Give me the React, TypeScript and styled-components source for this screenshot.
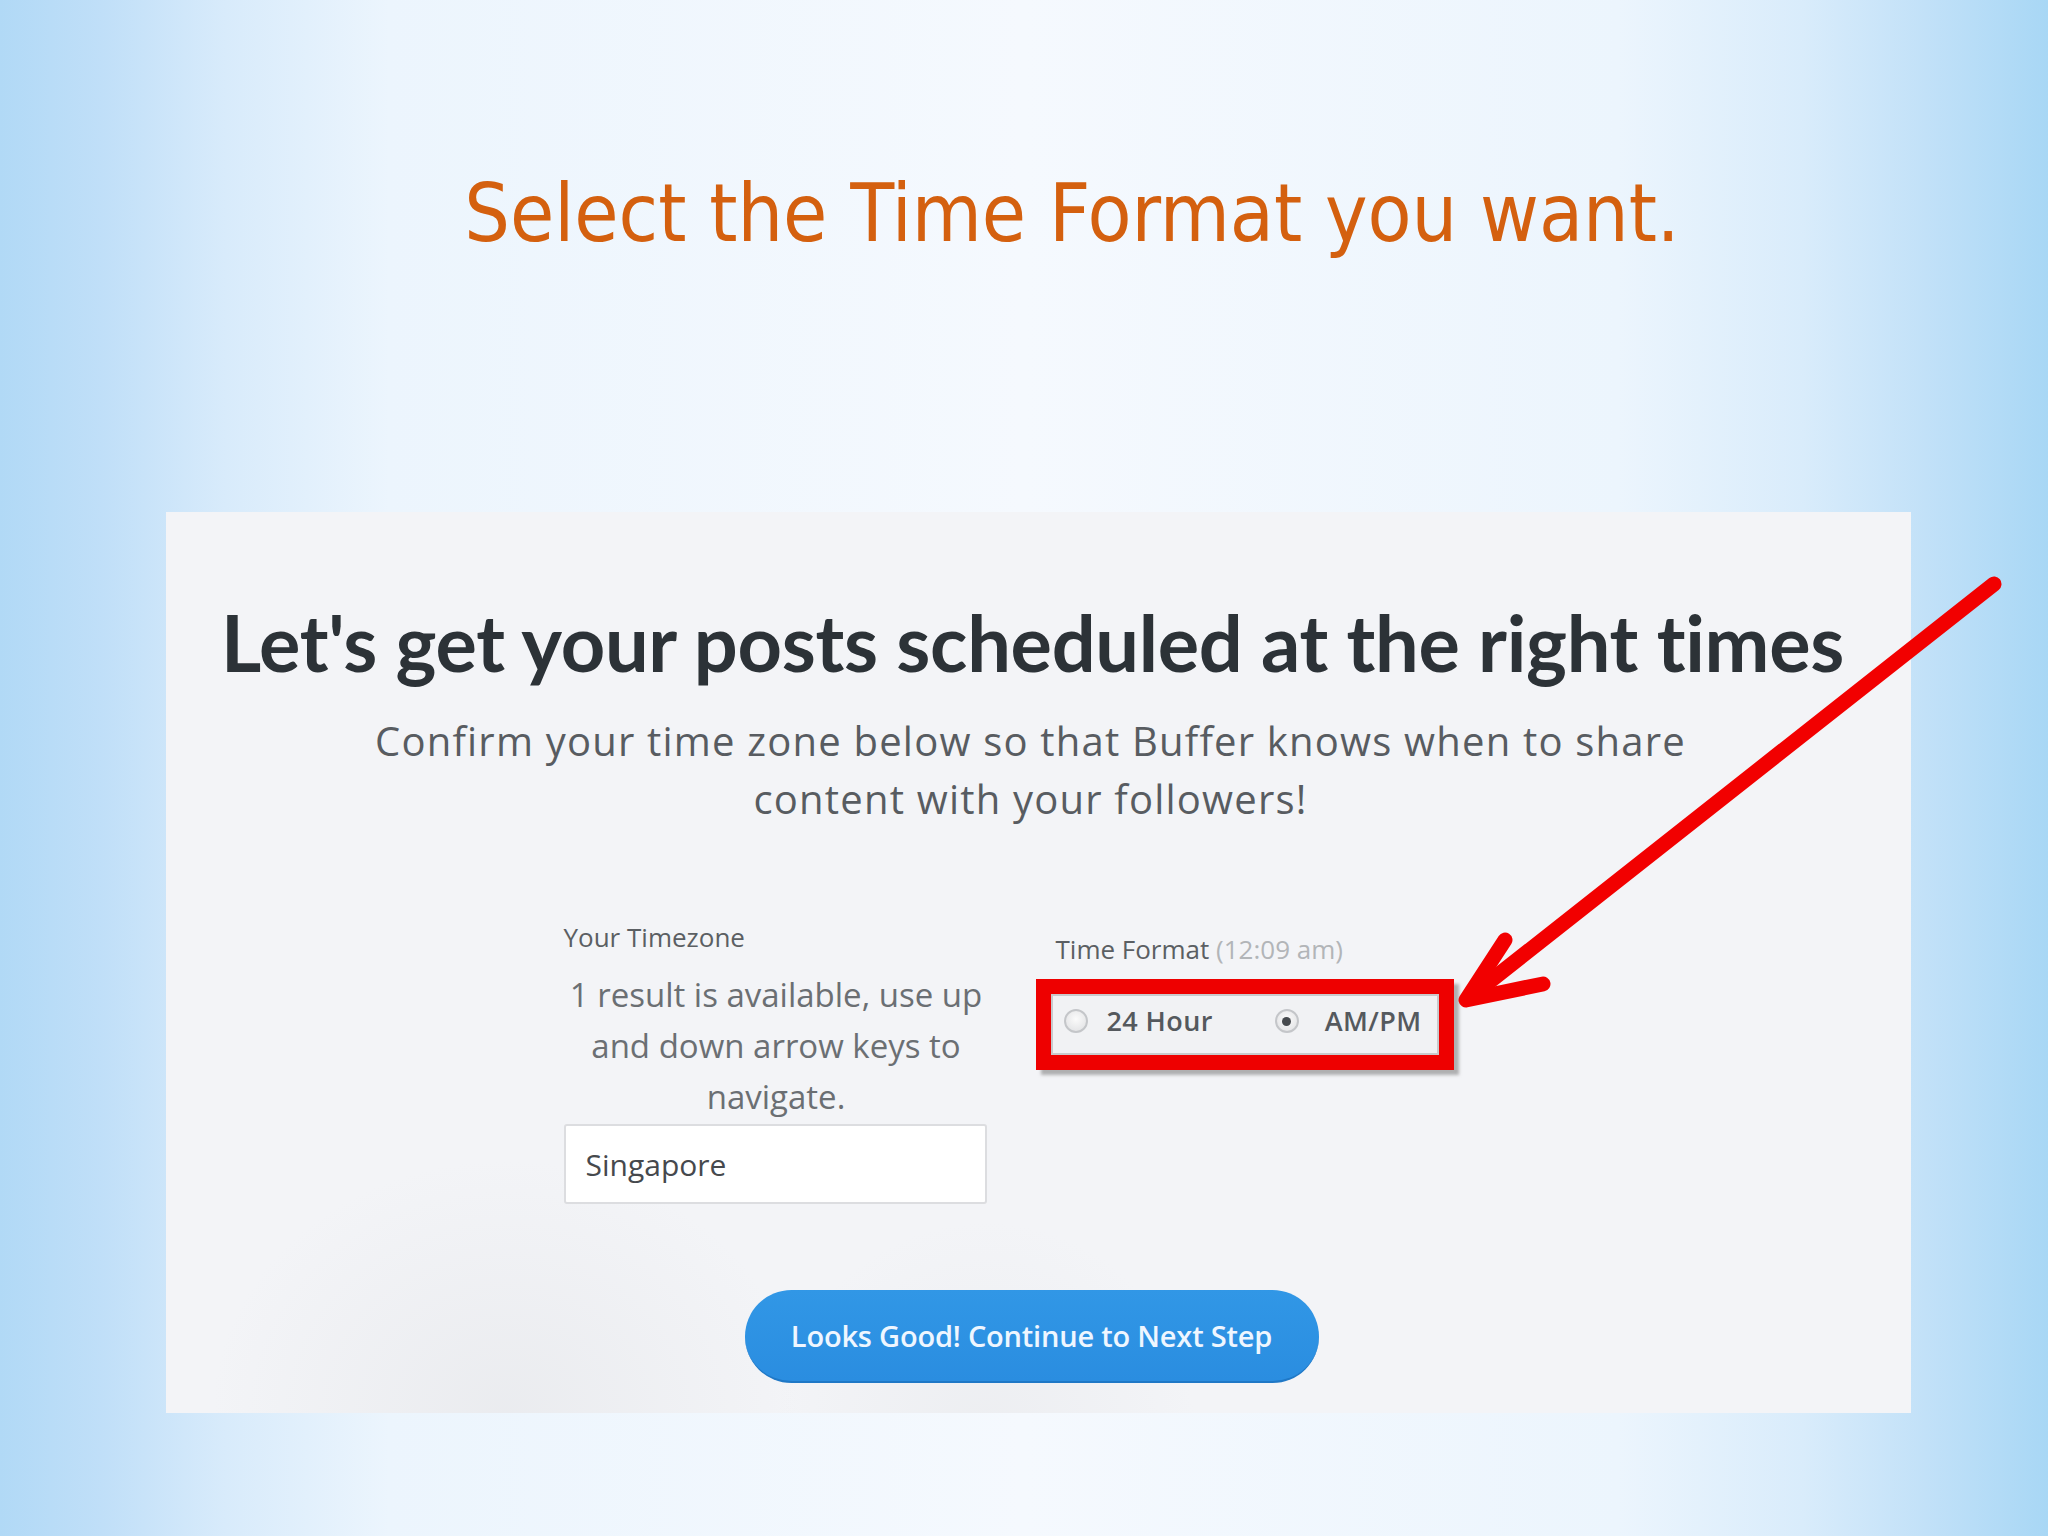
import React from "react";
import styled, { createGlobalStyle } from "styled-components";

const Global = createGlobalStyle`
  html, body { margin: 0; padding: 0; }
  body { width: 2048px; height: 1536px; overflow: hidden; }
`;

const Slide = styled.div`
  position: relative;
  width: 2048px;
  height: 1536px;
  display: flex;
  flex-direction: column;
  align-items: flex-start;
  background:
    linear-gradient(
      90deg,
      #b1d9f6 0%,
      #c0dff8 5%,
      #d8ebfb 11%,
      #ecf5fd 19%,
      #f5f9fe 50%,
      #ecf5fd 79%,
      #d9ecfb 88%,
      #c2e1f8 94%,
      #a8d7f5 100%
    );
`;

const Title = styled.h1`
  align-self: stretch;
  margin: 167px 0 0 0;
  padding-left: 96px;
  text-align: center;
  font-family: "DejaVu Sans Condensed", "DejaVu Sans", sans-serif;
  font-weight: normal;
  font-size: 80px;
  line-height: 93px;
  color: #d4600f;
`;

const Panel = styled.section`
  margin: 252px 0 0 166px;
  width: 1745px;
  height: 901px;
  box-sizing: border-box;
  padding-top: 86px;
  display: flex;
  flex-direction: column;
  align-items: center;
  background:
    radial-gradient(ellipse 420px 360px at 340px 900px, rgba(218, 220, 224, 0.35), rgba(218, 220, 224, 0) 70%),
    radial-gradient(ellipse 300px 300px at 820px 920px, rgba(222, 224, 228, 0.3), rgba(222, 224, 228, 0) 70%),
    #f3f4f7;
`;

const Heading = styled.h2`
  margin: 0;
  font-family: Lato, "Open Sans", sans-serif;
  font-weight: 700;
  font-size: 77.5px;
  line-height: 90px;
  color: #2c3237;
  letter-spacing: -0.3px;
  white-space: nowrap;
  transform: translateX(-6px);
`;

const Subtitle = styled.p`
  margin: 24px 0 0 0;
  width: 1400px;
  text-align: center;
  font-family: "Open Sans", sans-serif;
  font-size: 40px;
  letter-spacing: 1.2px;
  line-height: 58px;
  color: #585c61;
  transform: translateX(-8px);
`;

const FormRow = styled.div`
  margin-top: 91px;
  display: flex;
  align-items: flex-start;
  gap: 47px;
  transform: translateX(-30px);
`;

const Column = styled.div<{ $offset?: number }>`
  display: flex;
  flex-direction: column;
  padding-top: ${(p) => p.$offset ?? 0}px;
`;

const Label = styled.div<{ $indent?: number }>`
  font-family: "Open Sans", sans-serif;
  font-size: 26px;
  line-height: 36px;
  color: #5b5f63;
  white-space: nowrap;
  padding-left: ${(p) => p.$indent ?? 0}px;
`;

const Hint = styled.span`
  color: #b2b5b8;
`;

const Help = styled.div`
  margin-top: 14px;
  width: 425px;
  text-align: center;
  font-family: "Open Sans", sans-serif;
  font-size: 33px;
  line-height: 51px;
  color: #6b6f73;
`;

const Input = styled.div`
  margin-top: 2px;
  width: 423px;
  height: 80px;
  box-sizing: border-box;
  border: 2px solid #dcdde0;
  border-radius: 3px;
  background: #ffffff;
  display: flex;
  align-items: center;
  padding-left: 20px;
  font-family: "Open Sans", sans-serif;
  font-size: 30px;
  color: #46494d;
`;

const Highlight = styled.div`
  margin-top: 12px;
  width: 418px;
  height: 91px;
  box-sizing: border-box;
  border: 15px solid #ee0000;
  box-shadow: 5px 5px 3px rgba(120, 120, 120, 0.55);
`;

const RadioGroup = styled.div`
  height: 100%;
  box-sizing: border-box;
  border: 2px solid #c9cacc;
  display: flex;
  align-items: flex-start;
  padding: 7px 0 0 11px;
  background: #f1f2f4;
`;

const Option = styled.label<{ $gap: number }>`
  display: flex;
  align-items: center;
  flex-shrink: 0;
  white-space: nowrap;
  gap: ${(p) => p.$gap}px;
  margin-right: 62px;
  font-family: "Open Sans", sans-serif;
  font-weight: 600;
  font-size: 27px;
  letter-spacing: 0.4px;
  line-height: 36px;
  color: #55595d;
`;

const Radio = styled.span<{ $checked?: boolean }>`
  width: 24px;
  height: 24px;
  flex-shrink: 0;
  border-radius: 50%;
  box-sizing: border-box;
  border: 2px solid #c4c6c9;
  background: radial-gradient(circle at 50% 40%, #fbfbfb, #dedfe1);
  display: flex;
  align-items: center;
  justify-content: center;
  &::after {
    content: "";
    width: 9px;
    height: 9px;
    border-radius: 50%;
    background: ${(p) => (p.$checked ? "#45494d" : "transparent")};
  }
`;

const Button = styled.button`
  margin-top: 86px;
  width: 574px;
  height: 93px;
  border: none;
  border-bottom: 2px solid #1f78c6;
  border-radius: 47px;
  background: linear-gradient(#3197e6, #2a8de0);
  color: #eef6ff;
  font-family: "Open Sans", sans-serif;
  font-weight: 600;
  font-size: 29px;
  letter-spacing: -0.2px;
  transform: translateX(-7px);
  cursor: pointer;
`;

const Annotation = styled.svg`
  position: absolute;
  left: 0;
  top: 0;
  width: 2048px;
  height: 1536px;
  pointer-events: none;
`;

export default function App() {
  return (
    <>
      <Global />
      <Slide>
        <Title>Select the Time Format you want.</Title>
        <Panel>
          <Heading>Let's get your posts scheduled at the right times</Heading>
          <Subtitle>
            Confirm your time zone below so that Buffer knows when to share content with your followers!
          </Subtitle>
          <FormRow>
            <Column>
              <Label>Your Timezone</Label>
              <Help>1 result is available, use up and down arrow keys to navigate.</Help>
              <Input>Singapore</Input>
            </Column>
            <Column $offset={12}>
              <Label $indent={20}>
                Time Format <Hint>(12:09 am)</Hint>
              </Label>
              <Highlight>
                <RadioGroup>
                  <Option $gap={19}>
                    <Radio />
                    24 Hour
                  </Option>
                  <Option $gap={26}>
                    <Radio $checked />
                    AM/PM
                  </Option>
                </RadioGroup>
              </Highlight>
            </Column>
          </FormRow>
          <Button>Looks Good! Continue to Next Step</Button>
        </Panel>
        <Annotation viewBox="0 0 2048 1536">
          <g stroke="#f20000" strokeWidth="15" strokeLinecap="round" strokeLinejoin="round" fill="none">
            <line x1="1994" y1="584" x2="1470" y2="997" />
            <polyline points="1505,940 1466,1000 1543,984" />
          </g>
        </Annotation>
      </Slide>
    </>
  );
}
